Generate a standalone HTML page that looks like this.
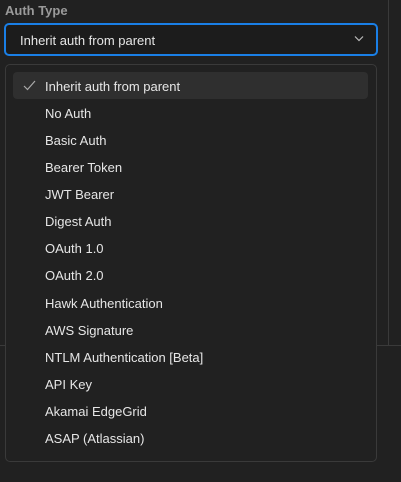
<!DOCTYPE html>
<html><head><style>
body{margin:0;width:401px;height:482px;background:#212121;position:relative;overflow:hidden;font-family:"Liberation Sans",sans-serif;}
.lbl{position:absolute;left:5px;top:3px;font-size:13px;color:#9a9a9a;font-weight:bold;}
.sel{position:absolute;left:4px;top:23px;width:370px;height:29px;border:2px solid #1a7fe6;border-radius:5px;background:#1c1c1c;}
.sel span{position:absolute;left:14px;top:8px;font-size:13px;color:#e6e6e6;}
.vl{position:absolute;left:388px;top:0;width:1px;height:345px;background:#3a3a3a;}
.hl{position:absolute;top:345px;height:1px;background:#3a3a3a;}
.menu{position:absolute;left:5px;top:64px;width:370px;height:396px;border:1px solid #3a3a3a;border-radius:5px;background:#212121;}
.it{position:absolute;left:45px;font-size:13px;color:#e6e6e6;}
.hi{position:absolute;left:13px;top:72px;width:355px;height:27px;background:#2f2f2f;border-radius:4px;}
</style></head><body>
<div class="vl"></div>
<div class="hl" style="left:0;width:6px"></div>
<div class="hl" style="left:376px;width:25px"></div>
<div class="lbl">Auth Type</div>
<div class="sel"><span>Inherit auth from parent</span>
<svg style="position:absolute;right:12px;top:10px" width="10" height="7" viewBox="0 0 10 7"><path d="M1 1.5 L5 5.5 L9 1.5" stroke="#bbb" stroke-width="1.2" fill="none"/></svg></div>
<div class="menu"></div>
<div class="hi"></div>
<svg style="position:absolute;left:23px;top:80px" width="13" height="11" viewBox="0 0 13 11"><path d="M1 6 L4.5 9.5 L12 1" stroke="#aaa" stroke-width="1.2" fill="none"/></svg>
<div class="it" style="top:79px">Inherit auth from parent</div>
<div class="it" style="top:106px">No Auth</div>
<div class="it" style="top:133px">Basic Auth</div>
<div class="it" style="top:160px">Bearer Token</div>
<div class="it" style="top:187px">JWT Bearer</div>
<div class="it" style="top:214px">Digest Auth</div>
<div class="it" style="top:241px">OAuth 1.0</div>
<div class="it" style="top:268px">OAuth 2.0</div>
<div class="it" style="top:296px">Hawk Authentication</div>
<div class="it" style="top:323px">AWS Signature</div>
<div class="it" style="top:350px">NTLM Authentication [Beta]</div>
<div class="it" style="top:377px">API Key</div>
<div class="it" style="top:404px">Akamai EdgeGrid</div>
<div class="it" style="top:431px">ASAP (Atlassian)</div>
</body></html>
